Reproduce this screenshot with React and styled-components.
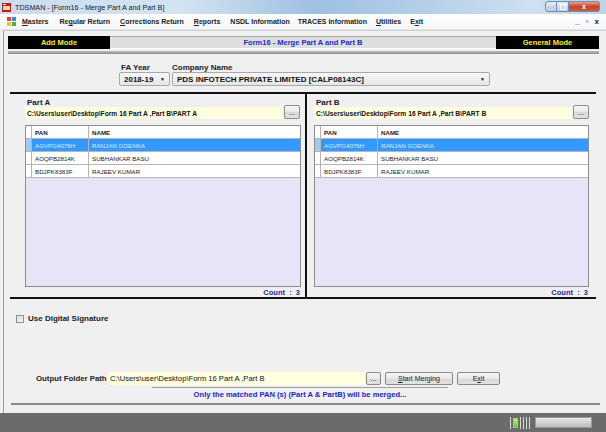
import React from 'react';
import styled, { createGlobalStyle } from 'styled-components';

const GlobalStyle = createGlobalStyle`
  html, body {
    margin: 0;
    padding: 0;
    background: #f0f0f0;
  }
  * {
    box-sizing: border-box;
  }
`;

const Window = styled.div`
  width: 606px;
  height: 432px;
  display: flex;
  flex-direction: column;
  font-family: "Liberation Sans", Arial, sans-serif;
  overflow: hidden;
  background: #f0f0f0;
`;

const TitleBar = styled.div`
  height: 14px;
  display: flex;
  align-items: center;
  padding-left: 2px;
  background: linear-gradient(to right, #c9dcef 0%, #d4e3f2 30%, #9ec0e2 52%, #b5cfe9 70%, #cfe0f1 88%, #bcd3ea 100%);
  font-size: 7.2px;
  color: #1a1a1a;
`;

const TitleText = styled.span`
  margin-left: 4px;
  flex: 1;
`;

const WinButtons = styled.div`
  display: flex;
  align-self: flex-start;
  margin-right: 6px;
  margin-top: 1px;
`;

const WinButton = styled.div`
  width: ${p => p.$w}px;
  height: 11px;
  border: 1px solid #6e8bb0;
  border-left-width: ${p => (p.$first ? 1 : 0)}px;
  border-radius: ${p => p.$radius};
  background: ${p => p.$bg};
  display: flex;
  align-items: center;
  justify-content: center;
  color: #fff;
  font-size: 7px;
  font-weight: 700;
`;

const MenuBar = styled.div`
  height: 16px;
  display: flex;
  align-items: center;
  padding-left: 7px;
  background: linear-gradient(to bottom, #ffffff, #f3f5f8);
  border-bottom: 1px solid #e2e5ea;
  font-size: 7px;
  font-weight: 700;
  color: #222;
`;

const MenuItem = styled.span`
  margin-left: ${p => p.$gap}px;
  white-space: nowrap;
  & u {
    text-decoration: underline;
  }
`;

const MdiControls = styled.div`
  margin-left: auto;
  margin-right: 7px;
  display: flex;
  gap: 6px;
  font-size: 8px;
  font-weight: 700;
  color: #222;
`;

const Main = styled.div`
  flex: 1;
  display: flex;
  flex-direction: column;
  margin-left: 3px;
  border-left: 1px solid #9a9a9a;
  border-top: 1px solid #d0d0d0;
  background: #f0f0f0;
  padding: 5px 0 0 4px;
`;

const ModeBar = styled.div`
  height: 13px;
  width: 591px;
  display: flex;
  font-size: 7.5px;
  font-weight: 700;
`;

const ModeBox = styled.div`
  width: ${p => p.$w}px;
  background: #000;
  color: #f2f23a;
  display: flex;
  align-items: center;
  justify-content: center;
`;

const ModeTitle = styled.div`
  flex: 1;
  background: #dedede;
  border-top: 1px solid #a5a5a5;
  border-bottom: 1px solid #ffffff;
  color: #1a2ccc;
  display: flex;
  align-items: center;
  justify-content: center;
`;

const Rule = styled.div`
  height: ${p => p.$h}px;
  width: ${p => p.$w}px;
  margin-left: ${p => p.$left || 0}px;
  margin-top: ${p => p.$top || 0}px;
  background: ${p => p.$color};
  flex-shrink: 0;
`;

const CompanyRow = styled.div`
  display: flex;
  gap: 2px;
  margin-top: 9px;
  margin-left: 111px;
`;

const Field = styled.div`
  display: flex;
  flex-direction: column;
`;

const Label = styled.div`
  font-size: 8px;
  font-weight: 700;
  color: #222;
  height: 9px;
  line-height: 9px;
  padding-left: ${p => p.$pad || 0}px;
  white-space: nowrap;
`;

const Select = styled.div`
  width: ${p => p.$w}px;
  height: 14px;
  border: 1px solid #a9a9a9;
  border-radius: 2px;
  background: linear-gradient(to bottom, #f7f7f7, #e6e6e6);
  display: flex;
  align-items: center;
  padding: 0 4px;
  font-size: 8px;
  font-weight: 700;
  color: #111;
  & span {
    flex: 1;
  }
  & i {
    font-style: normal;
    font-size: 5px;
  }
`;

const Panels = styled.div`
  display: flex;
  width: 586px;
  margin-left: 2px;
  height: 203px;
`;

const Panel = styled.div`
  display: flex;
  flex-direction: column;
  width: ${p => p.$w}px;
  padding-left: ${p => p.$pl}px;
  padding-top: 4px;
`;

const Divider = styled.div`
  width: 2px;
  background: #111;
`;

const PathRow = styled.div`
  display: flex;
  align-items: flex-end;
  gap: 1px;
  height: 12px;
`;

const PathInput = styled.div`
  width: ${p => p.$w}px;
  height: ${p => p.$h || 12}px;
  background: #ffffe0;
  font-size: ${p => (p.$bold ? 6.7 : 7.6)}px;
  font-weight: ${p => (p.$bold ? 700 : 400)};
  color: #111;
  display: flex;
  align-items: center;
  padding-left: 2px;
  white-space: nowrap;
  overflow: hidden;
  flex-shrink: 0;
`;

const Button = styled.div`
  width: ${p => p.$w}px;
  height: ${p => p.$h || 14}px;
  margin-left: ${p => p.$ml || 0}px;
  border: 1px solid #8a8a8a;
  border-radius: 2px;
  background: linear-gradient(to bottom, #f6f6f6 0%, #e8e8e8 50%, #d8d8d8 51%, #e2e2e2 100%);
  font-size: 7px;
  color: #222;
  display: flex;
  align-items: center;
  justify-content: center;
  flex-shrink: 0;
`;

const Grid = styled.div`
  width: ${p => p.$w}px;
  height: 162px;
  margin-top: 6px;
  border: 1px solid #8d8d8d;
  background: #e5e5f7;
  display: flex;
  flex-direction: column;
`;

const GridRow = styled.div`
  display: flex;
  height: 13px;
  background: ${p => (p.$selected ? '#3399ff' : '#ffffff')};
  color: ${p => (p.$selected ? '#d6ecff' : '#222')};
  font-size: 6.2px;
  font-weight: ${p => (p.$head ? 700 : 400)};
  border-bottom: 1px solid #b5b5b5;
`;

const RowHead = styled.div`
  width: 6px;
  background: ${p => (p.$selected ? '#9ccbf5' : '#ffffff')};
  border-right: 1px solid #b5b5b5;
`;

const Cell = styled.div`
  width: ${p => (p.$w ? `${p.$w}px` : 'auto')};
  flex: ${p => (p.$w ? 'none' : 1)};
  padding-left: 3px;
  display: flex;
  align-items: center;
  border-right: ${p => (p.$w ? '1px solid #b5b5b5' : 'none')};
  white-space: nowrap;
`;

const Count = styled.div`
  width: ${p => p.$w}px;
  text-align: right;
  font-size: 7.5px;
  font-weight: 700;
  color: #1e2a9e;
  margin-top: 1px;
  padding-right: 1px;
`;

const CheckRow = styled.label`
  display: flex;
  align-items: center;
  gap: 4px;
  margin-left: 8px;
  margin-top: 15px;
  height: 9px;
  font-size: 8px;
  font-weight: 700;
  color: #222;
`;

const CheckBox = styled.span`
  width: 8px;
  height: 8px;
  border: 1px solid #8e8f8f;
  background: linear-gradient(135deg, #dcdcdc, #f8f8f8);
`;

const OutputRow = styled.div`
  display: flex;
  align-items: center;
  height: 13px;
  margin-top: 49px;
  margin-left: 28px;
`;

const OutputLabel = styled.div`
  font-size: 7.8px;
  font-weight: 700;
  color: #222;
  width: 72px;
  white-space: nowrap;
`;

const Note = styled.div`
  width: 296px;
  margin-left: 144px;
  border-top: 1px solid #a0a0a0;
  padding-top: 2px;
  margin-top: 2px;
  text-align: center;
  font-size: 7.6px;
  font-weight: 700;
  color: #2424c8;
  white-space: nowrap;
`;

const StatusBar = styled.div`
  height: 19px;
  background: #6b6b6b;
  display: flex;
  align-items: center;
  justify-content: flex-end;
  padding-right: 14px;
  gap: 2px;
`;

const StatusTick = styled.div`
  width: 1px;
  height: 12px;
  background: #d8d8d8;
`;

const StatusLight = styled.div`
  width: 5px;
  height: 10px;
  background: linear-gradient(to bottom, #c9f07a, #5cc21e);
  border: 1px solid #9ad860;
`;

const Progress = styled.div`
  width: 57px;
  height: 11px;
  margin-left: 3px;
  background: linear-gradient(to bottom, #e8e8e8, #bdbdbd);
  border: 1px solid #9a9a9a;
`;

const rows = [
  { pan: 'AGVPG4076H', name: 'RANJAN GOENKA', selected: true },
  { pan: 'AOQPB2814K', name: 'SUBHANKAR BASU' },
  { pan: 'BDJPK8383F', name: 'RAJEEV KUMAR' },
];

const AppIcon = () => (
  <svg width="9" height="9" viewBox="0 0 9 9">
    <rect x="0" y="0" width="9" height="9" fill="#b82020" />
    <rect x="1" y="3" width="7" height="4" fill="#f4d6a0" />
    <rect x="1" y="1" width="3" height="1" fill="#fff" />
  </svg>
);

const MenuIcon = () => (
  <svg width="9" height="9" viewBox="0 0 9 9">
    <rect x="0" y="0" width="4" height="4" fill="#e44a2a" />
    <rect x="5" y="0" width="4" height="4" fill="#3c8be0" />
    <rect x="0" y="5" width="4" height="4" fill="#f2c230" />
    <rect x="5" y="5" width="4" height="4" fill="#4cb04a" />
  </svg>
);

const DataGrid = ({ width, panWidth }) => (
  <Grid $w={width}>
    <GridRow $head>
      <RowHead />
      <Cell $w={panWidth}>PAN</Cell>
      <Cell>NAME</Cell>
    </GridRow>
    {rows.map(r => (
      <GridRow key={r.pan} $selected={r.selected}>
        <RowHead $selected={r.selected} />
        <Cell $w={panWidth}>{r.pan}</Cell>
        <Cell>{r.name}</Cell>
      </GridRow>
    ))}
  </Grid>
);

const PartPanel = ({ title, path, width, pl, inputW, gridW }) => (
  <Panel $w={width} $pl={pl}>
    <Label $pad={2}>{title}</Label>
    <PathRow>
      <PathInput $w={inputW} $bold>{path}</PathInput>
      <Button $w={16}>...</Button>
    </PathRow>
    <DataGrid width={gridW} panWidth={57} />
    <Count $w={gridW}>Count &nbsp;: &nbsp;3</Count>
  </Panel>
);

export default function App() {
  return (
    <>
      <GlobalStyle />
      <Window>
        <TitleBar>
          <AppIcon />
          <TitleText>TDSMAN - [Form16 - Merge Part A and Part B]</TitleText>
          <WinButtons>
            <WinButton $w={12} $first $radius="3px 0 0 3px" $bg="linear-gradient(to bottom, #e4eefa, #b8cde6)">
              <svg width="6" height="2"><rect width="6" height="2" fill="#fff" stroke="#555" strokeWidth="0.5" /></svg>
            </WinButton>
            <WinButton $w={12} $radius="0" $bg="linear-gradient(to bottom, #e4eefa, #b8cde6)">
              <svg width="6" height="6"><rect x="0.5" y="0.5" width="5" height="5" fill="none" stroke="#fff" strokeWidth="1.2" /></svg>
            </WinButton>
            <WinButton $w={31} $radius="0 3px 3px 0" $bg="linear-gradient(to bottom, #e8a28c, #c8442a 50%, #d05a3c)">
              x
            </WinButton>
          </WinButtons>
        </TitleBar>
        <MenuBar>
          <MenuIcon />
          <MenuItem $gap={6}><u>M</u>asters</MenuItem>
          <MenuItem $gap={11}>Re<u>g</u>ular Return</MenuItem>
          <MenuItem $gap={10}><u>C</u>orrections Return</MenuItem>
          <MenuItem $gap={10}><u>R</u>eports</MenuItem>
          <MenuItem $gap={10}>NSDL Information</MenuItem>
          <MenuItem $gap={8}>TRACES Information</MenuItem>
          <MenuItem $gap={9}><u>U</u>tilities</MenuItem>
          <MenuItem $gap={9}>E<u>x</u>it</MenuItem>
          <MdiControls>
            <span>_</span>
            <span>&#9643;</span>
            <span>x</span>
          </MdiControls>
        </MenuBar>
        <Main>
          <ModeBar>
            <ModeBox $w={102}>Add Mode</ModeBox>
            <ModeTitle>Form16 - Merge Part A and Part B</ModeTitle>
            <ModeBox $w={103}>General Mode</ModeBox>
          </ModeBar>
          <Rule $h={3} $w={591} $top={2} $color="linear-gradient(to bottom, #bdbdbd, #8c8c8c)" />
          <CompanyRow>
            <Field>
              <Label $pad={2}>FA Year</Label>
              <Select $w={51}>
                <span>2018-19</span>
                <i>&#9660;</i>
              </Select>
            </Field>
            <Field>
              <Label>Company Name</Label>
              <Select $w={318}>
                <span>PDS INFOTECH PRIVATE LIMITED [CALP08143C]</span>
                <i>&#9660;</i>
              </Select>
            </Field>
          </CompanyRow>
          <Rule $h={2} $w={586} $left={2} $top={6} $color="#111" />
          <Panels>
            <PartPanel
              title="Part A"
              path="C:\Users\user\Desktop\Form 16 Part A ,Part B\PART A"
              width={295}
              pl={15}
              inputW={258}
              gridW={276}
            />
            <Divider />
            <PartPanel
              title="Part B"
              path="C:\Users\user\Desktop\Form 16 Part A ,Part B\PART B"
              width={289}
              pl={7}
              inputW={258}
              gridW={275}
            />
          </Panels>
          <Rule $h={2} $w={586} $left={2} $color="#111" />
          <CheckRow>
            <CheckBox />
            Use Digital Signature
          </CheckRow>
          <OutputRow>
            <OutputLabel>Output Folder Path</OutputLabel>
            <PathInput $w={257} $h={13}>C:\Users\user\Desktop\Form 16 Part A ,Part B</PathInput>
            <Button $w={15} $h={13} $ml={1}>...</Button>
            <Button $w={68} $h={13} $ml={4}><u>S</u>tart Merging</Button>
            <Button $w={43} $h={13} $ml={4}>E<u>x</u>it</Button>
          </OutputRow>
          <Note>Only the matched PAN (s) (Part A &amp; PartB) will be merged...</Note>
          <Rule $h={2} $w={589} $left={3} $top={4} $color="#8a8a8a" />
        </Main>
        <StatusBar>
          <StatusTick />
          <StatusLight />
          <StatusTick />
          <StatusTick />
          <StatusTick />
          <StatusTick />
          <Progress />
        </StatusBar>
      </Window>
    </>
  );
}
